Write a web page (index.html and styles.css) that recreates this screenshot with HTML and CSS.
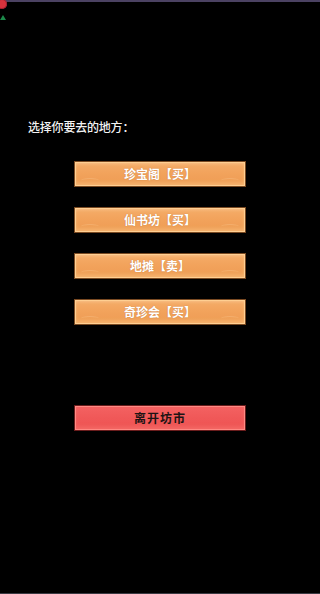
FILE: index.html
```html
<!DOCTYPE html>
<html lang="zh-CN">
<head>
<meta charset="utf-8">
<title>坊市</title>
<link rel="stylesheet" href="styles.css">
</head>
<body>
<div class="screen">
  <div class="topbar"></div>
  <span class="dot-red"></span>
  <span class="dot-green"></span>
  <p class="prompt">选择你要去的地方：</p>
  <div class="menu">
    <button class="btn btn-orange"><span class="cr cl"></span><span class="cr crr"></span>珍宝阁【买】</button>
    <button class="btn btn-orange"><span class="cr cl"></span><span class="cr crr"></span>仙书坊【买】</button>
    <button class="btn btn-orange"><span class="cr cl"></span><span class="cr crr"></span>地摊【卖】</button>
    <button class="btn btn-orange"><span class="cr cl"></span><span class="cr crr"></span>奇珍会【买】</button>
  </div>
  <button class="btn btn-red">离开坊市</button>
  <div class="bottomline"></div>
</div>
</body>
</html>
```
FILE: styles.css
```css
* { box-sizing: border-box; }
html, body { margin: 0; padding: 0; background: #000; }
body { font-family: "Noto Sans CJK SC", "Noto Sans", sans-serif; }
.screen {
  position: relative;
  width: 320px;
  height: 594px;
  background: #000;
  overflow: hidden;
  display: flex;
  flex-direction: column;
}
.topbar {
  height: 2px;
  background: #4b4262;
  flex: none;
}
.dot-red {
  position: absolute;
  left: -3px;
  top: -1px;
  width: 10px;
  height: 10px;
  border-radius: 50%;
  background: #d8323c;
  box-shadow: inset 0 0 0 1px #a02030;
}
.dot-green {
  position: absolute;
  left: 0;
  top: 15px;
  width: 0;
  height: 0;
  border-left: 3px solid transparent;
  border-right: 3px solid transparent;
  border-bottom: 5px solid #1c8a4a;
}
.prompt {
  margin: 117px 0 0 28px;
  color: #f2f2f2;
  font-size: 12px;
  font-weight: 500;
  line-height: 16px;
  letter-spacing: -0.2px;
}
.menu {
  margin-top: 26px;
  display: flex;
  flex-direction: column;
  gap: 20px;
  align-items: center;
}
.btn {
  position: relative;
  width: 172px;
  height: 26px;
  padding: 0;
  margin: 0;
  font-family: "Noto Sans CJK SC", sans-serif;
  font-size: 12px;
  font-weight: 700;
  line-height: 24px;
  cursor: pointer;
  flex: none;
}
.btn-orange {
  color: #fff;
  border: 1px solid #7a4a22;
  background: linear-gradient(#f5ad6a 0%, #f2a35c 45%, #ee9b53 100%);
  box-shadow: inset 0 0 0 1px #ffcf92, inset 0 -3px 4px rgba(255, 214, 150, 0.45), inset 0 2px 3px rgba(255, 230, 190, 0.35);
  text-shadow: 0 0 1px rgba(150, 80, 30, 0.6);
}
.cr {
  position: absolute;
  bottom: 3px;
  width: 18px;
  height: 5px;
  border-top: 1px solid rgba(255, 220, 170, 0.25);
  border-radius: 50% 50% 0 0;
}
.cl { left: 6px; }
.crr { right: 6px; }
.btn-red {
  align-self: center;
  margin-top: 80px;
  color: #1e1414;
  letter-spacing: 1px;
  border: 1px solid #6a1c1c;
  background: linear-gradient(#f46262 0%, #f05858 50%, #ee5454 100%);
  box-shadow: inset 0 0 0 1px #ff8a84, inset 0 -3px 4px rgba(255, 140, 130, 0.4);
}
.bottomline {
  position: absolute;
  left: 0;
  right: 0;
  bottom: 0;
  height: 1px;
  background: #3a3a42;
}
```
